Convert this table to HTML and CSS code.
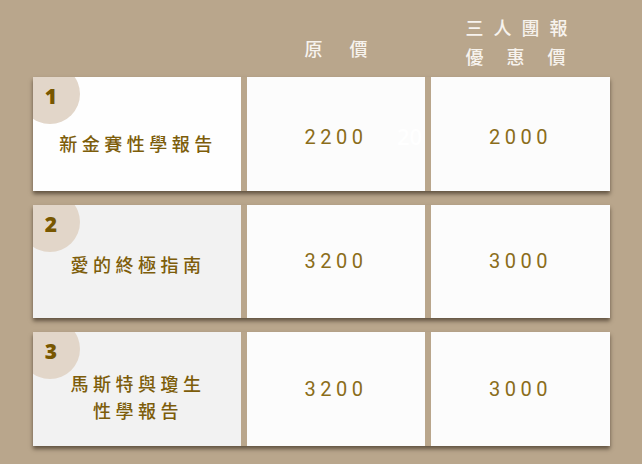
FILE: index.html
```html
<!DOCTYPE html>
<html lang="zh-Hant">
<head>
<meta charset="utf-8">
<link rel="stylesheet" href="styles.css">
</head>
<body>
<div class="page">
  <div class="head">
    <div></div>
    <div class="hcell hmid"><span class="orig">原價</span></div>
    <div class="hcell hright"><span class="l1">三人團報</span><span class="l2">優惠價</span></div>
  </div>
  <div class="rows">
    <div class="row">
      <div class="name white r1">
        <div class="badge"><span>1</span></div>
        <span class="title">新金賽性學報告</span>
      </div>
      <div class="price r1p">2200<span class="ghost">20</span></div>
      <div class="price r1p">2000</div>
    </div>
    <div class="row">
      <div class="name gray r2">
        <div class="badge"><span>2</span></div>
        <span class="title">愛的終極指南</span>
      </div>
      <div class="price">3200</div>
      <div class="price">3000</div>
    </div>
    <div class="row">
      <div class="name gray r3">
        <div class="badge"><span>3</span></div>
        <span class="title">馬斯特與瓊生<br>性學報告</span>
      </div>
      <div class="price r3p">3200</div>
      <div class="price r3p">3000</div>
    </div>
  </div>
</div>
</body>
</html>
```
FILE: styles.css
```css
html, body {
  margin: 0;
  padding: 0;
  background: #b9a68c;
}
.page {
  width: 642px;
  height: 464px;
  padding-left: 33px;
  box-sizing: border-box;
  overflow: hidden;
}
.head, .row {
  display: grid;
  grid-template-columns: 208px 178px 179px;
  column-gap: 6px;
  width: 577px;
}
.head {
  height: 77px;
  align-items: start;
}
.hcell {
  display: flex;
  flex-direction: column;
  align-items: center;
  color: #f7f3ee;
  font-family: "Noto Sans CJK TC", sans-serif;
  font-weight: 500;
  font-size: 18px;
  line-height: 29px;
}
.hmid { padding-top: 34px; }
.orig { letter-spacing: 27px; padding-left: 27px; }
.hright { padding-top: 13px; }
.l1 { letter-spacing: 10px; padding-left: 2px; }
.l2 { letter-spacing: 23px; padding-left: 13px; }
.rows {
  display: flex;
  flex-direction: column;
  gap: 14px;
}
.row {
  height: 113.5px;
  box-shadow: 0 3px 4px rgba(40, 28, 16, 0.6);
}
.name, .price {
  position: relative;
  overflow: hidden;
  display: flex;
  align-items: center;
  justify-content: center;
  box-sizing: border-box;
}
.white { background: #fefefe; }
.gray { background: #f2f2f2; }
.badge {
  position: absolute;
  left: -13px;
  top: -13px;
  width: 60px;
  height: 60px;
  border-radius: 50%;
  background: #e2d6c9;
}
.badge span {
  position: absolute;
  left: 13px;
  top: 20px;
  width: 36px;
  text-align: center;
  font-family: "Open Sans", sans-serif;
  font-weight: 800;
  font-size: 21px;
  line-height: 24px;
  color: #785700;
}
.title {
  position: relative;
  font-family: "Noto Sans CJK TC", sans-serif;
  font-weight: 500;
  font-size: 18px;
  line-height: 27px;
  letter-spacing: 4.5px;
  padding-left: 2px;
  text-align: center;
  color: #7d5d0a;
}
.r1 { padding-top: 20px; }
.r2 { padding-top: 6px; }
.r3 { padding-top: 17px; }
.price {
  background: #fcfcfc;
  font-family: Roboto, sans-serif;
  font-weight: 400;
  font-size: 20px;
  letter-spacing: 4.5px;
  color: #8b6d1a;
}
.r1p { padding-top: 6px; }
.ghost {
  position: absolute;
  left: 150px;
  top: 44px;
  font-family: "Open Sans", sans-serif;
  font-size: 22px;
  font-weight: 600;
  letter-spacing: 0;
  color: #ffffff;
}
```
